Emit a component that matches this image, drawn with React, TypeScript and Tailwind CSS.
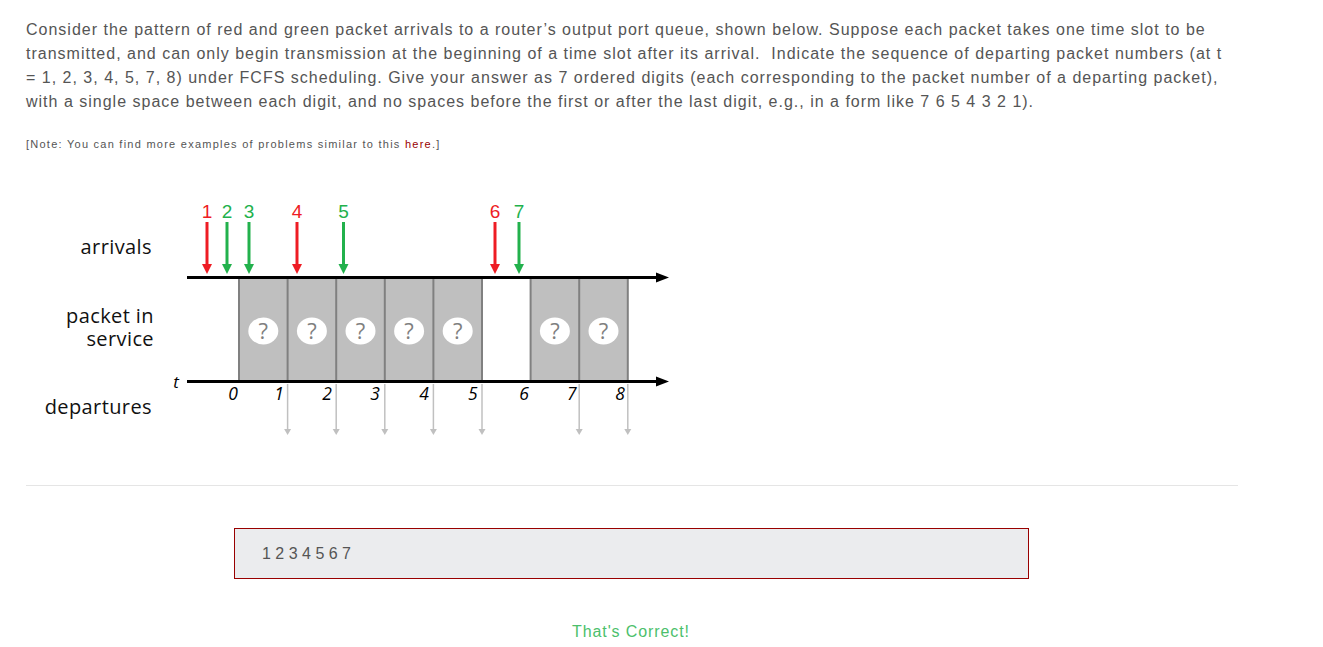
import React from "react";

const RED = "#ee1c24";
const GREEN = "#22b14c";

function Arrow({ x, color, label }: { x: number; color: string; label: string }) {
  return (
    <g>
      <text x={x} y={219} textAnchor="middle" fontFamily="'Liberation Sans', Arial, sans-serif" fontSize={19} fill={color}>
        {label}
      </text>
      <line x1={x} y1={223} x2={x} y2={266} stroke={color} strokeWidth={3} />
      <polygon points={`${x - 5},${265} ${x + 5},${265} ${x},${275}`} fill={color} />
    </g>
  );
}

function Diagram() {
  const edge = (i: number) => 239 + 48.6 * i;
  const busy = [0, 1, 2, 3, 4, 6, 7];
  const deps = [1, 2, 3, 4, 5, 7, 8];
  const labelX = [233, 279, 327, 375, 424, 472.7, 524, 571.7, 620];
  const font = "'Open Sans', 'Noto Sans', sans-serif";
  return (
    <svg width={700} height={255} className="block">
      <g transform="translate(-26,-190)">
        {/* left labels */}
        <text x={152} y={255} textAnchor="end" fontFamily={font} fontSize={20} letterSpacing={0.4} fill="#111">arrivals</text>
        <text x={154} y={324} textAnchor="end" fontFamily={font} fontSize={20} letterSpacing={0.4} fill="#111">packet in</text>
        <text x={154} y={347} textAnchor="end" fontFamily={font} fontSize={20} letterSpacing={0.4} fill="#111">service</text>
        <text x={152} y={415} textAnchor="end" fontFamily={font} fontSize={20} letterSpacing={0.4} fill="#111">departures</text>

        {/* boxes */}
        {busy.map((i) => (
          <rect key={i} x={edge(i)} y={279} width={48.6} height={103} fill="#bfbfbf" />
        ))}
        {[0, 1, 2, 3, 4, 5, 6, 7, 8].map((i) => (
          <line key={i} x1={edge(i)} y1={279} x2={edge(i)} y2={382} stroke="#808080" strokeWidth={2} />
        ))}
        {busy.map((i) => (
          <g key={"q" + i}>
            <ellipse cx={edge(i) + 24.3} cy={332} rx={15} ry={13.5} fill="#fff" />
            <text x={edge(i) + 24.3} y={340} textAnchor="middle" fontFamily={font} fontSize={22} fill="#7f7f7f">?</text>
          </g>
        ))}

        {/* axes */}
        <line x1={187} y1={278.5} x2={660} y2={278.5} stroke="#000" strokeWidth={3} />
        <polygon points="656,273.5 669,278.5 656,283.5" fill="#000" />
        <line x1={187} y1={382.5} x2={660} y2={382.5} stroke="#000" strokeWidth={3} />
        <polygon points="656,377.5 669,382.5 656,387.5" fill="#000" />
        <text x={176} y={389} textAnchor="middle" fontFamily={font} fontStyle="italic" fontSize={17} fill="#000">t</text>

        {labelX.map((x, i) => (
          <text key={"l" + i} x={x} y={401} textAnchor="middle" fontFamily={font} fontStyle="italic" fontSize={17.5} fill="#000">
            {i}
          </text>
        ))}

        {/* departures */}
        {deps.map((i) => {
          const x = edge(i);
          return (
            <g key={"d" + i}>
              <line x1={x} y1={385} x2={x} y2={431} stroke="#c0c0c0" strokeWidth={1.5} />
              <polygon points={`${x - 3.5},${430} ${x + 3.5},${430} ${x},${436}`} fill="#c0c0c0" />
            </g>
          );
        })}

        {/* arrivals */}
        <Arrow x={207} color={RED} label="1" />
        <Arrow x={227} color={GREEN} label="2" />
        <Arrow x={249} color={GREEN} label="3" />
        <Arrow x={297} color={RED} label="4" />
        <Arrow x={343.5} color={GREEN} label="5" />
        <Arrow x={495} color={RED} label="6" />
        <Arrow x={519} color={GREEN} label="7" />
      </g>
    </svg>
  );
}

export default function App() {
  return (
    <div className="min-h-screen bg-white font-['Liberation_Sans',Arial,sans-serif]">
      <div className="w-[1264px] px-[26px] pt-[18px]">
        <p className="w-[1205px] text-[16px] leading-[24px] tracking-[1px] text-[#555]">
          Consider the pattern of red and green packet arrivals to a router’s output port queue, shown below. Suppose each packet takes one time slot to be transmitted, and can only begin transmission at the beginning of a time slot after its arrival.&nbsp; Indicate the sequence of departing packet numbers (at t = 1, 2, 3, 4, 5, 7, 8) under FCFS scheduling. Give your answer as 7 ordered digits (each corresponding to the packet number of a departing packet), with a single space between each digit, and no spaces before the first or after the last digit, e.g., in a form like 7 6 5 4 3 2 1).
        </p>
        <p className="mt-[22px] text-[11px] leading-[16px] tracking-[1.25px] text-[#555]">
          [Note: You can find more examples of problems similar to this <span className="text-[#990000]">here</span>.]
        </p>
        <div className="mt-[37px]">
          <Diagram />
        </div>
        <div className="mt-[41px] h-px w-[1212px] bg-[#e5e5e5]" />
        <div className="mt-[42px] flex w-[1212px]">
          <div className="ml-[208px] flex h-[51px] w-[795px] items-center border border-[#990000] bg-[#ebecee] px-[27px] text-[16px] text-[#555]">
            1 2 3 4 5 6 7
          </div>
        </div>
        <div className="mt-[41px] w-[1210px] text-center text-[16px] leading-[24px] tracking-[0.9px] text-[#4cbf6c]">
          That's Correct!
        </div>
      </div>
    </div>
  );
}
